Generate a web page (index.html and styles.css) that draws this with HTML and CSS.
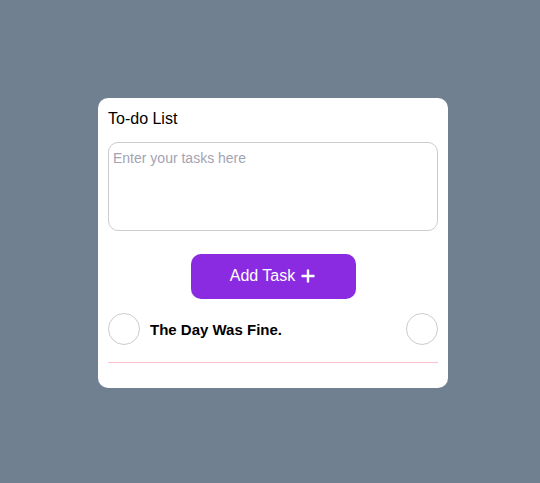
FILE: index.html
```html
<!DOCTYPE html>
<html>
<head>
<meta charset="utf-8">
<link rel="stylesheet" href="styles.css">
</head>
<body>
<div class="page">
  <div class="card">
    <div class="title">To-do List</div>
    <textarea class="input" placeholder="Enter your tasks here"></textarea>
    <div class="actions">
      <button class="add-btn">Add Task
        <svg class="plus" width="16" height="16" viewBox="0 0 16 16"><path d="M8 1.5v13M1.5 8h13" stroke="#fff" stroke-width="2.4" fill="none"/></svg>
      </button>
    </div>
    <ul class="tasks">
      <li class="task">
        <span class="check"></span>
        <span class="task-text">The Day Was Fine.</span>
        <span class="remove"></span>
      </li>
    </ul>
  </div>
</div>
</body>
</html>
```
FILE: styles.css
```css
* { box-sizing: border-box; }
html, body { margin: 0; height: 100%; }
body {
  background: #708090;
  font-family: "Liberation Sans", Arial, sans-serif;
}
.page {
  height: 100%;
  display: flex;
  align-items: center;
  justify-content: center;
  padding-left: 6px;
}
.card {
  width: 350px;
  background: #fff;
  border-radius: 10px;
  padding: 12px 10px 10px;
  margin-top: 3px;
}
.title {
  font-size: 16px;
  line-height: 18px;
  color: #000;
}
.input {
  display: block;
  width: 330px;
  height: 89px;
  margin-top: 14px;
  border: 1px solid #ccc;
  border-radius: 10px;
  padding: 7px 4px;
  font-family: "Liberation Sans", Arial, sans-serif;
  font-size: 14px;
  resize: none;
  outline: none;
}
.input::placeholder { color: #a3a3b3; }
.actions {
  display: flex;
  justify-content: center;
  margin-top: 23px;
}
.add-btn {
  width: 165px;
  height: 45px;
  background: #8a2be2;
  color: #fff;
  border: none;
  border-radius: 10px;
  font-family: "Liberation Sans", Arial, sans-serif;
  font-size: 16px;
  display: flex;
  align-items: center;
  justify-content: center;
  gap: 5px;
  padding: 0 0 2px;
}
.plus { display: block; }
.tasks {
  list-style: none;
  margin: 14px 0 15px;
  padding: 0;
}
.task {
  display: flex;
  align-items: center;
  padding-bottom: 17px;
  border-bottom: 1px solid #ffc0cb;
}
.check, .remove {
  width: 32px;
  height: 32px;
  border: 1px solid #ccc;
  border-radius: 50%;
  flex: none;
}
.task-text {
  flex: 1;
  margin-left: 10px;
  font-weight: bold;
  font-size: 15px;
  color: #000;
}
```
